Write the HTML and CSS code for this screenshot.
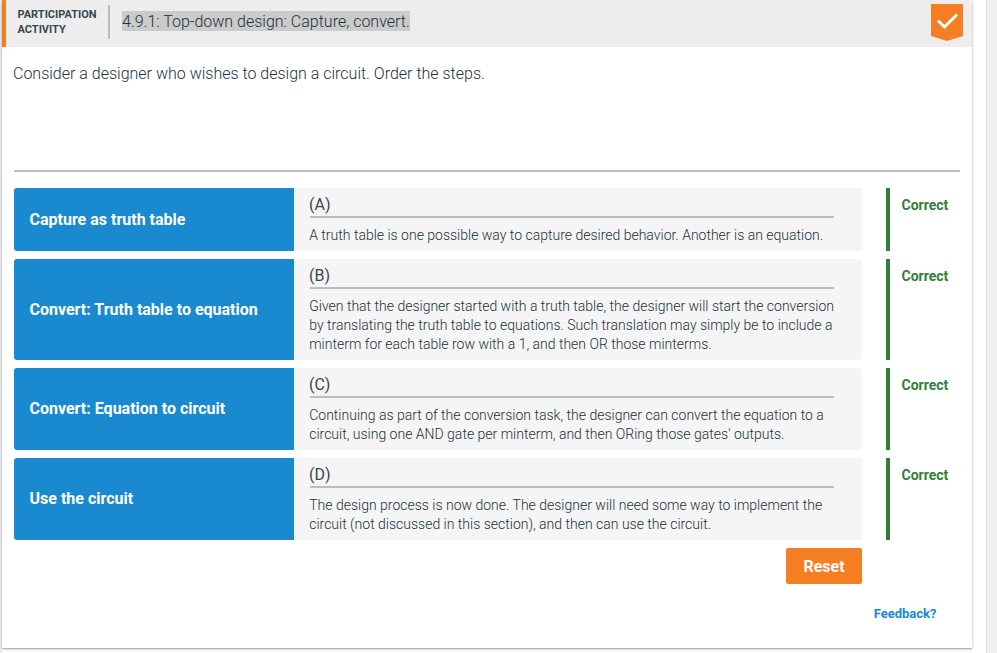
FILE: index.html
```
<!DOCTYPE html>
<html lang="en">
<head>
<meta charset="utf-8">
<title>4.9.1: Top-down design</title>
<link rel="stylesheet" href="styles.css">
</head>
<body>
<div class="page">
  <main class="activity">
    <header class="header">
      <div class="label">PARTICIPATION<br>ACTIVITY</div>
      <h1 class="title"><span>4.9.1: Top-down design: Capture, convert.</span></h1>
      <svg class="badge" width="32" height="37" viewBox="0 0 32 37">
        <path fill="#f57e23" d="M0 0H32V32L16 37L0 32Z"/>
        <path fill="none" stroke="#fff" stroke-width="3" d="M7 16.5L13.5 23L26 10.5"/>
      </svg>
    </header>
    <section class="content">
      <p class="prompt"><span>Consider a designer who wishes to design a circuit. Order the steps.</span></p>
      <div class="rows">
        <div class="row">
          <div class="term">Capture as truth table</div>
          <div class="definition">
            <div class="letter">(A)</div>
            <p class="text">A truth table is one possible way to capture desired behavior. Another is an equation.</p>
          </div>
          <div class="status">Correct</div>
        </div>
        <div class="row">
          <div class="term">Convert: Truth table to equation</div>
          <div class="definition">
            <div class="letter">(B)</div>
            <p class="text">Given that the designer started with a truth table, the designer will start the conversion<br>by translating the truth table to equations. Such translation may simply be to include a<br>minterm for each table row with a 1, and then OR those minterms.</p>
          </div>
          <div class="status">Correct</div>
        </div>
        <div class="row">
          <div class="term">Convert: Equation to circuit</div>
          <div class="definition">
            <div class="letter">(C)</div>
            <p class="text">Continuing as part of the conversion task, the designer can convert the equation to a<br>circuit, using one AND gate per minterm, and then ORing those gates' outputs.</p>
          </div>
          <div class="status">Correct</div>
        </div>
        <div class="row">
          <div class="term">Use the circuit</div>
          <div class="definition">
            <div class="letter">(D)</div>
            <p class="text">The design process is now done. The designer will need some way to implement the<br>circuit (not discussed in this section), and then can use the circuit.</p>
          </div>
          <div class="status">Correct</div>
        </div>
      </div>
      <div class="actions"><button class="reset">Reset</button></div>
      <div class="feedback"><a>Feedback?</a></div>
    </section>
  </main>
</div>
</body>
</html>
```
FILE: styles.css
```
* { box-sizing: border-box; }
body {
  margin: 0;
  height: 653px;
  overflow: hidden;
  background: #f0f0f0;
  font-family: Roboto, sans-serif;
  color: #37474f;
}
.page {
  width: 987px;
  height: 653px;
  padding-left: 2px;
  background: linear-gradient(to right, #eee 2px, #fff 2px);
  border-right: 1px solid #e2e2e2;
}
.activity {
  width: 970px;
  height: 648px;
  background: #fff;
  box-shadow: 0 1px 3px rgba(0, 0, 0, .25), 0 1px 1px rgba(0, 0, 0, .15);
}
.header {
  display: flex;
  height: 47px;
  background: #ededed;
  border-left: 4px solid #f57e23;
}
.label {
  width: 104px;
  height: 34px;
  margin-top: 5px;
  padding: 2px 0 0 11.5px;
  border-right: 2px solid #bdbdbd;
  font-size: 11px;
  line-height: 15px;
  font-weight: 700;
  white-space: nowrap;
}
.title {
  flex: 1;
  margin: 11px 0 0 12px;
  font-size: 16px;
  line-height: 22px;
  font-weight: 300;
  color: #20323b;
  white-space: nowrap;
}
.title span { display: inline-block; height: 20px; background: #cbcbcb; }
.badge { margin: 4px 9px 0 0; }
.content { padding: 16px 12px 0; }
.prompt {
  height: 109px;
  margin: 0 0 16px;
  border-bottom: 2px solid #bdbdbd;
  font-size: 16px;
  line-height: 21px;
  font-weight: 300;
  color: #20323b;
}
.prompt span { margin-left: -1px; }
.rows { display: grid; gap: 8px; }
.row { display: grid; grid-template-columns: 280px 568px 62px; }
.row .status { margin-left: 24px; }
.term {
  display: flex;
  align-items: center;
  padding: 0 0 1px 15.5px;
  border-radius: 3px 0 0 3px;
  background: #1989d0;
  color: #fff;
  font-size: 16px;
  font-weight: 700;
}
.definition {
  padding: 6px 28px 6px 16px;
  border-radius: 0 3px 3px 0;
  background: #f5f5f5;
}
.letter {
  height: 24px;
  border-bottom: 2px solid #bdbdbd;
  font-size: 16px;
  line-height: 21px;
  text-indent: -1px;
}
.text {
  margin: 8px 0 0 -.8px;
  font-size: 14px;
  line-height: 19px;
  font-weight: 300;
  color: #20323b;
  white-space: nowrap;
}
.status {
  padding: 7px 0 0 11.5px;
  border-left: 4px solid #318038;
  color: #318038;
  font-size: 14px;
  line-height: 20px;
  font-weight: 700;
}
.actions { width: 848px; margin-top: 8px; display: flex; justify-content: flex-end; }
.reset {
  width: 76px;
  height: 36px;
  padding: 1px 0 0;
  border: 0;
  border-radius: 2px;
  background: #f57e23;
  color: #fff;
  font: 700 16px/35px Roboto, sans-serif;
}
.feedback {
  margin: 21px 23.5px 0 0;
  color: #1989d0;
  font-size: 13px;
  line-height: 18px;
  font-weight: 700;
  text-align: right;
}
```
